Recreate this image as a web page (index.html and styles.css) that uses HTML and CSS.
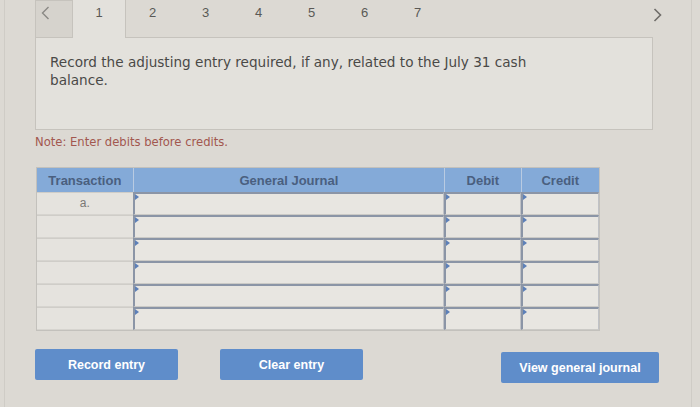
FILE: index.html
```html
<!DOCTYPE html>
<html lang="en">
<head>
    <meta charset="UTF-8">
    <meta name="viewport" content="width=device-width, initial-scale=1.0">
    <title>Journal Entry</title>
    <link rel="stylesheet" href="styles.css">
</head>
<body>
    <div class="page">
        <!-- question tabs -->
        <div class="tabs">
            <div class="tab-nav prev">
                <svg width="9" height="14" viewBox="0 0 9 14"><path d="M7.5 1 L1.5 7 L7.5 13" fill="none" stroke="#8a8884" stroke-width="1.4"/></svg>
            </div>
            <div class="tab active">1</div>
            <div class="tab-strip">
                <div class="tab">2</div>
                <div class="tab">3</div>
                <div class="tab">4</div>
                <div class="tab">5</div>
                <div class="tab">6</div>
                <div class="tab">7</div>
            </div>
            <div class="tab-nav next">
                <svg width="9" height="14" viewBox="0 0 9 14"><path d="M1.5 1 L7.5 7 L1.5 13" fill="none" stroke="#6f6d69" stroke-width="1.6"/></svg>
            </div>
        </div>

        <div class="question">
            <p>Record the adjusting entry required, if any, related to the July 31 cash balance.</p>
        </div>

        <p class="note">Note: Enter debits before credits.</p>

        <table class="journal">
            <thead>
                <tr>
                    <th class="col-trans">Transaction</th>
                    <th class="col-journal">General Journal</th>
                    <th class="col-debit">Debit</th>
                    <th class="col-credit">Credit</th>
                </tr>
            </thead>
            <tbody>
                <tr>
                    <td class="trans">a.</td>
                    <td class="field"></td>
                    <td class="field"></td>
                    <td class="field"></td>
                </tr>
                <tr>
                    <td class="trans"></td>
                    <td class="field"></td>
                    <td class="field"></td>
                    <td class="field"></td>
                </tr>
                <tr>
                    <td class="trans"></td>
                    <td class="field"></td>
                    <td class="field"></td>
                    <td class="field"></td>
                </tr>
                <tr>
                    <td class="trans"></td>
                    <td class="field"></td>
                    <td class="field"></td>
                    <td class="field"></td>
                </tr>
                <tr>
                    <td class="trans"></td>
                    <td class="field"></td>
                    <td class="field"></td>
                    <td class="field"></td>
                </tr>
                <tr>
                    <td class="trans"></td>
                    <td class="field"></td>
                    <td class="field"></td>
                    <td class="field"></td>
                </tr>
            </tbody>
        </table>

        <div class="actions">
            <button class="btn">Record entry</button>
            <button class="btn clear">Clear entry</button>
            <button class="btn view">View general journal</button>
        </div>
    </div>
</body>
</html>
```

FILE: styles.css
```css
body {
    margin: 0;
    background-color: #dcd9d3;
    font-family: 'Liberation Sans', Arial, sans-serif;
}

.page {
    height: 407px;
    margin: 0 8px 0 4px;
    border-left: 1px solid #cfccc6;
    border-right: 1px solid #cfccc6;
    box-sizing: border-box;
    padding-left: 30px;
}

/* tabs */
.tabs {
    display: flex;
    height: 38px;
    margin-bottom: -1px;
}

.tab-nav {
    box-sizing: border-box;
    height: 38px;
    display: flex;
    align-items: flex-start;
    padding-top: 5px;
}

.tab-nav.prev {
    width: 38px;
    padding-left: 5px;
    background-color: #d6d3cd;
    border: 1px solid #c6c3bd;
}

.tab-nav.next {
    width: 22px;
    padding-left: 8px;
    padding-top: 8px;
}

.tab {
    width: 53px;
    text-align: center;
    font-size: 13px;
    color: #5a5956;
    padding-top: 5px;
    box-sizing: border-box;
}

.tab.active {
    width: 52px;
    height: 38px;
    background-color: #e3e1dc;
    position: relative;
    z-index: 1;
}

.tab-strip {
    display: flex;
    width: 520px;
    height: 38px;
    border-left: 1px solid #c6c3bd;
    box-sizing: border-box;
}

/* question box */
.question {
    width: 618px;
    height: 93px;
    box-sizing: border-box;
    background-color: #e3e1dc;
    border: 1px solid #c6c3bd;
    padding: 15px 14px;
}

.question p {
    margin: 0;
    max-width: 505px;
    font-family: 'DejaVu Sans', Verdana, sans-serif;
    font-size: 13.6px;
    line-height: 18px;
    color: #4a4947;
}

.note {
    margin: 5px 0 18px;
    font-family: 'DejaVu Sans', Verdana, sans-serif;
    font-size: 11.6px;
    line-height: 14px;
    color: #a2574f;
}

/* journal table */
.journal {
    width: 564px;
    margin-left: 1px;
    border-collapse: separate;
    border-spacing: 0;
    border: 1px solid #c3c1bc;
}

.journal th {
    height: 24px;
    padding: 0;
    background-color: #84aad8;
    color: #4a5f7f;
    font-size: 13px;
    font-weight: bold;
    border-left: 1px solid #b9cbe2;
}

.journal th:first-child {
    border-left: none;
}

.col-trans { width: 96px; }
.col-journal { width: 314px; }
.col-debit { width: 76px; }
.col-credit { width: 78px; }

.journal td {
    height: 20px;
    padding: 0;
    vertical-align: top;
}

.journal td.trans {
    text-align: center;
    font-size: 12px;
    line-height: 20px;
    color: #7a7975;
    background-color: #e5e3de;
    border-top: 1px solid #cfcdc8;
    border-bottom: 1px solid #d6d4cf;
}

.journal td.field {
    background-color: #e8e6e1;
    border-top: 2px solid #8b95a6;
    border-left: 2px solid #8b95a6;
    border-right: 1px solid #c0c2c6;
    border-bottom: 1px solid #cbcac6;
}

.journal td.field::before {
    content: '';
    display: block;
    width: 0;
    height: 0;
    border-left: 4px solid #5d80b8;
    border-top: 3px solid transparent;
    border-bottom: 3px solid transparent;
}

/* buttons */
.actions {
    display: flex;
    width: 624px;
    margin-top: 18px;
}

.btn {
    width: 143px;
    height: 31px;
    border: none;
    border-radius: 2px;
    background-color: #5f8dca;
    color: white;
    font-family: 'Liberation Sans', Arial, sans-serif;
    font-size: 12.5px;
    font-weight: bold;
    cursor: pointer;
}

.btn.clear {
    margin-left: 42px;
}

.btn.view {
    width: 158px;
    margin-left: auto;
    margin-top: 3px;
}
```
